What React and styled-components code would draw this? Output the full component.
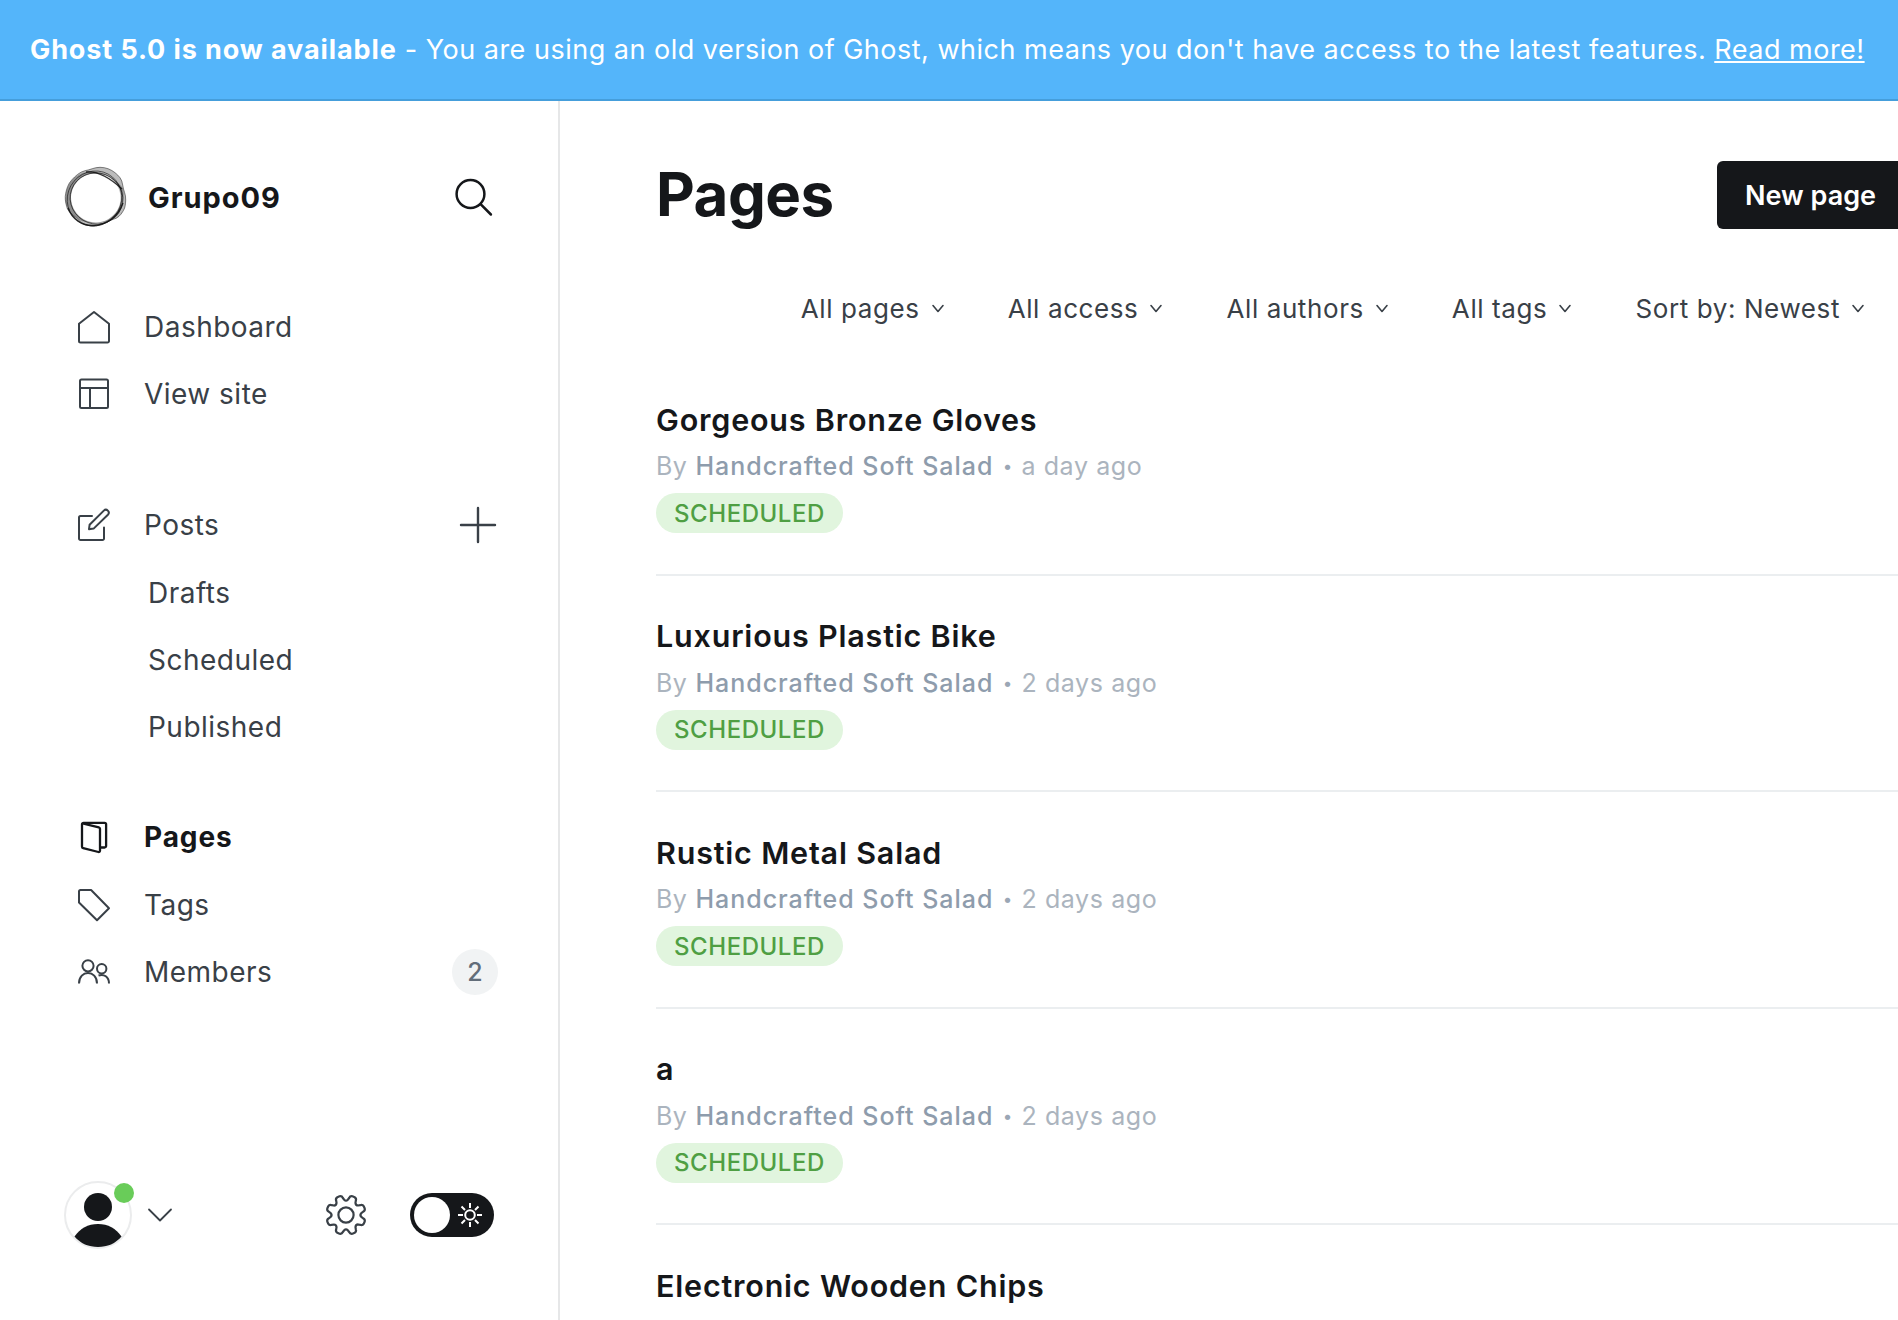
import React from "react";
import styled, { createGlobalStyle } from "styled-components";

const Global = createGlobalStyle`
  *, *::before, *::after { box-sizing: border-box; }
  html, body { margin: 0; overflow: hidden; background: #fff; }
  body {
    font-family: Inter, "Liberation Sans", sans-serif;
    font-size: 28px;
    color: #15171a;
    -webkit-font-smoothing: antialiased;
  }
  a { color: inherit; text-decoration: none; }
`;

const Shell = styled.div`
  height: 1320px;
  display: flex;
  flex-direction: column;
  overflow: hidden;
`;

const Banner = styled.div`
  flex: none;
  height: 101px;
  padding: 0 30px;
  border-bottom: 2px solid #459edb;
  background: #54b5fa;
  color: #fff;
  display: flex;
  align-items: center;
  white-space: nowrap;
  font-size: 27px;
  letter-spacing: 0.5px;
  b { font-weight: 700; letter-spacing: 0.9px; }
  a { text-decoration: underline; text-decoration-thickness: 2px; text-underline-offset: 2px; }
`;

const Columns = styled.div`
  flex: 1;
  min-height: 0;
  display: flex;
`;

const Sidebar = styled.nav`
  flex: none;
  width: 560px;
  border-right: 2px solid #e6e7e8;
  padding: 64px 60px 71px 64px;
  display: flex;
  flex-direction: column;
`;

const Brand = styled.div`
  height: 64px;
  padding-right: 6px;
  display: flex;
  align-items: center;
  margin-bottom: 64px;
`;

const SiteName = styled.div`
  flex: 1;
  margin-left: 20px;
  padding-top: 2px;
  font-weight: 700;
  font-size: 29px;
  letter-spacing: 0.95px;
  line-height: 40px;
`;

const NavGroup = styled.div`
  display: flex;
  flex-direction: column;
  margin-bottom: ${(p) => p.$gap}px;
`;

const NavItem = styled.a`
  height: 67.3px;
  display: flex;
  align-items: center;
  padding-left: ${(p) => (p.$sub ? 84 : 14)}px;
  gap: 34px;
  font-size: 28px;
  letter-spacing: ${(p) => (p.$active ? 0.9 : 0.48)}px;
  font-weight: ${(p) => (p.$active ? 700 : 400)};
  color: ${(p) => (p.$active ? "#15171a" : "#394047")};
  svg { flex: none; }
`;

const NavLabel = styled.span`
  flex: 1;
`;

const PlusSlot = styled.span`
  display: flex;
  margin-right: 2px;
`;

const Count = styled.span`
  flex: none;
  width: 46px;
  height: 46px;
  border-radius: 50%;
  background: #f1f3f4;
  color: #626d79;
  font-size: 25px;
  letter-spacing: 0;
  font-weight: 500;
  display: flex;
  align-items: center;
  justify-content: center;
`;

const UserBar = styled.div`
  margin-top: auto;
  height: 68px;
  display: flex;
  align-items: center;
`;

const AvatarWrap = styled.div`
  position: relative;
  width: 68px;
  height: 68px;
`;

const Dot = styled.span`
  position: absolute;
  top: 2px;
  right: -2px;
  width: 20px;
  height: 20px;
  border-radius: 50%;
  background: #69cc59;
`;

const CaretSlot = styled.span`
  display: flex;
  margin-left: 16px;
  flex: 1;
  color: #394047;
`;

const Toggle = styled.div`
  width: 84px;
  height: 44px;
  margin: 0 4px 0 44px;
  padding: 4px 12px 4px 4px;
  border-radius: 22px;
  background: #15171a;
  display: flex;
  align-items: center;
  justify-content: space-between;
`;

const Knob = styled.span`
  width: 36px;
  height: 36px;
  border-radius: 50%;
  background: #fff;
`;

const Main = styled.main`
  flex: 1;
  min-width: 0;
  padding: 60px 0 0 96px;
`;

const Header = styled.header`
  height: 68px;
  display: flex;
  align-items: center;
  justify-content: space-between;
`;

const Title = styled.h1`
  margin: 0;
  padding-bottom: 2px;
  font-size: 60px;
  line-height: 66px;
  letter-spacing: -0.5px;
  font-weight: 700;
`;

const NewButton = styled.a`
  flex: none;
  width: 190px;
  margin-right: -9px;
  height: 68px;
  border-radius: 6px;
  background: #15171a;
  color: #fff;
  font-size: 27px;
  font-weight: 600;
  padding-left: 28px;
  display: flex;
  align-items: center;
  white-space: nowrap;
`;

const Filters = styled.div`
  margin-top: 59px;
  height: 40px;
  padding-right: 34px;
  display: flex;
  align-items: center;
  justify-content: flex-end;
  gap: 64px;
`;

const Filter = styled.div`
  display: flex;
  align-items: center;
  gap: 12px;
  color: #394047;
  font-size: 26px;
  letter-spacing: 0.6px;
  white-space: nowrap;
`;

const List = styled.ol`
  list-style: none;
  margin: 31px 0 0;
  padding: 0;
`;

const Row = styled.li`
  height: 216.5px;
  border-bottom: 2px solid #ebeef0;
  padding-top: 39.5px;
`;

const RowTitle = styled.h3`
  margin: 0;
  font-size: 30.5px;
  line-height: 42px;
  letter-spacing: 0.8px;
  font-weight: 600;
`;

const Meta = styled.p`
  margin: 4.7px 0 0;
  font-size: 25px;
  line-height: 42px;
  letter-spacing: 0.5px;
  color: #abb4be;
  display: flex;
  align-items: center;
`;

const Author = styled.span`
  margin-left: 8px;
  font-weight: 500;
  letter-spacing: 0.98px;
  color: #8e9cac;
`;

const Bullet = styled.span`
  width: 28px;
  text-align: center;
  font-size: 17px;
  letter-spacing: 0;
  color: #9ba7b5;
`;

const When = styled.span`
  letter-spacing: 0.6px;
`;

const Status = styled.span`
  display: flex;
  align-items: center;
  width: 187px;
  height: 40px;
  margin-top: 6.3px;
  padding-left: 18px;
  border-radius: 20px;
  background: #e1f5de;
  color: #4f9f43;
  font-size: 24px;
  font-weight: 500;
  letter-spacing: 0.55px;
`;

const Line = ({ w, h = w, sw = 2, children, color = "currentColor" }) => (
  <svg width={w} height={h} viewBox={`0 0 ${w} ${h}`} fill="none" stroke={color} overflow="visible"
    strokeWidth={sw} strokeLinecap="round" strokeLinejoin="round">{children}</svg>
);

const Logo = () => (
  <svg width="64" height="64" viewBox="0 0 64 64" fill="none">
    <path fillRule="evenodd" fill="#222" fillOpacity=".3"
      d="M21 5.700C26 5 30 2.300 36 2.300S47 4.500 51 7.700 58 14 58.700 20 62 29 61.700 35 61 43 58.700 46.700 54 53 49.300 54.300 38 61 29.300 61 16.500 57 12.700 53.300 4 47 2.700 41.700 .700 33 1.700 28.300 4 19 7.700 15 15.500 7 21 5.700ZM31.700 8.500a24.800 24.600 0 1 0 .1 0Z" />
    <path stroke="#222" strokeOpacity=".6" strokeWidth=".9"
      d="M21 5.700C26 5 30 2.300 36 2.300S47 4.500 51 7.700 58 14 58.700 20 62 29 61.700 35 61 43 58.700 46.700 54 53 49.300 54.300 38 61 29.300 61 16.500 57 12.700 53.300 4 47 2.700 41.700 .700 33 1.700 28.300 4 19 7.700 15 15.500 7 21 5.700Z" />
    <path fillRule="evenodd" fill="#222" fillOpacity=".3"
      d="M2 30C3 15 16 6 29 6.500S57 18 59 24 59 48 49 54 16 60 8 49 1.500 36 2 30ZM31.500 8.500C18 8 7.500 19 7 32c0 14 11 25 24.500 25.500C45 57.500 56 47 57.500 33 58 19 45 8.500 31.500 8.500Z" />
    <g stroke="#111" strokeOpacity=".65" strokeWidth=".9">
      <ellipse cx="30.500" cy="33.500" rx="28" ry="26.800" transform="rotate(-50 30.500 33.500)" />
      <ellipse cx="32.500" cy="33.500" rx="26.500" ry="25.500" transform="rotate(20 32.500 33.500)" />
      <path d="M4 43C8 54 18 61 30 60.500S54 52 59 38M22 7c10-1 22 4 36 17" strokeWidth="1.400" strokeOpacity=".85" />
    </g>
  </svg>
);

const Search = () => (
  <Line w={37} sw={2.5}><circle cx="15.500" cy="15" r="13.900" /><path d="M25.600 25.100l10.300 10.400" /></Line>
);
const Home = () => (
  <Line w={32}><path d="M1 12.700 16 1l15 11.700V30a1.500 1.500 0 0 1-1.500 1.500h-27A1.500 1.500 0 0 1 1 30Z" /></Line>
);
const Site = () => (
  <Line w={32}><rect x="2" y="1.500" width="28" height="28.500" rx="1.500" /><path d="M2 10h28M12 10v20" /></Line>
);
const Pencil = () => (
  <Line w={32}>
    <path d="M14 7H2.500A1.500 1.500 0 0 0 1 8.500v21A1.500 1.500 0 0 0 2.500 31h22a1.500 1.500 0 0 0 1.500-1.500V18.500" />
    <path d="M11 20.200 11.600 15.800 25.800 1.600a2.900 2.900 0 0 1 4.100 4.100L15.600 19.600Z" />
  </Line>
);
const PagesIcon = () => (
  <Line w={32} sw={2.3}>
    <path d="M5.500 2.600 20.800 6.400a1.600 1.600 0 0 1 1.200 1.500v21.900a1.300 1.300 0 0 1-1.600 1.200L5.200 27.200A1.600 1.600 0 0 1 4 25.700V3.300A1.500 1.500 0 0 1 5.500 1.800H26.600A1.500 1.500 0 0 1 28.100 3.300V25A1.500 1.500 0 0 1 26.600 26.500H22.500" />
  </Line>
);
const Tag = () => (
  <Line w={32}><path d="M2.500 1h10.600L31 19.200 19 31.200 1 13.500V2.500A1.500 1.500 0 0 1 2.500 1Z" /></Line>
);
const Members = () => (
  <Line w={32}>
    <circle cx="10" cy="9.800" r="5.600" /><path strokeLinecap="butt" d="M1 27.500C1 13.500 19 13.500 19 27.500" />
    <circle cx="23.700" cy="12.800" r="4.700" /><path strokeLinecap="butt" d="M20.500 19.500C26 17.500 31 21 31 27.500" />
  </Line>
);
const Plus = () => <Line w={36} sw={2.4}><path d="M18 1v34M1 18h34" /></Line>;
const Caret = () => <Line w={24} h={14} sw={1.8}><path d="m1 1.500 11 11 11-11" /></Line>;
const SmallCaret = () => <Line w={12} h={8} sw={1.6}><path d="m1 1.500 5 6L11 1.500" /></Line>;

const Gear = () => {
  const pts = [];
  for (let i = 0; i < 8; i++) {
    const a = (i * Math.PI) / 4 - Math.PI / 8;
    const at = (r, d) => `${(20 + r * Math.cos(a + d)).toFixed(2)} ${(20 + r * Math.sin(a + d)).toFixed(2)}`;
    pts.push(`${i ? "L" : "M"}${at(17.3, -0.21)} Q${at(19.7, -0.18)} ${at(19.8, -0.06)} L${at(19.8, 0.06)} Q${at(19.7, 0.18)} ${at(17.3, 0.21)} L${at(15.4, 0.27)} Q${at(13.6, 0.3927)} ${at(15.4, 0.515)}`);
  }
  return (
    <Line w={40} color="#394047" sw={2.2}>
      <path d={pts.join(" ") + "Z"} /><circle cx="20" cy="20" r="7.600" />
    </Line>
  );
};

const Sun = () => (
  <Line w={24} color="#fff">
    <circle cx="12" cy="12" r="4.800" />
    <path strokeLinecap="butt" d="M12 0v5M12 19v5M0 12h5M19 12h5M3.500 3.500l3.500 3.500M17 17l3.500 3.500M3.500 20.500 7 17M17 7l3.500-3.500" />
  </Line>
);

const Avatar = () => (
  <svg width="68" height="68" viewBox="0 0 68 68">
    <circle cx="34" cy="34" r="33" fill="#fff" stroke="#ebeced" strokeWidth="2" />
    <circle cx="34" cy="26" r="14" fill="#15171a" />
    <path d="M10.500 55.500C16 47.500 24 43 34 43s18 4.500 23.500 12.500C51.500 62.500 43.500 66 34 66s-17.500-3.500-23.500-10.500Z" fill="#15171a" />
  </svg>
);

const pages = [
  { title: "Gorgeous Bronze Gloves", when: "a day ago" },
  { title: "Luxurious Plastic Bike", when: "2 days ago" },
  { title: "Rustic Metal Salad", when: "2 days ago" },
  { title: "a", when: "2 days ago" },
  { title: "Electronic Wooden Chips" },
];

const Nav = ({ icon, label, end, ...rest }) => (
  <NavItem {...rest}>{icon}<NavLabel>{label}</NavLabel>{end}</NavItem>
);

export default function App() {
  return (
    <>
      <Global />
      <Shell>
        <Banner>
          <span>
            <b>Ghost 5.0 is now available</b> - You are using an old version of Ghost, which means you don't have access to the latest features. <a href="#more">Read more!</a>
          </span>
        </Banner>
        <Columns>
          <Sidebar>
            <Brand><Logo /><SiteName>Grupo09</SiteName><Search /></Brand>
            <NavGroup $gap={64}>
              <Nav icon={<Home />} label="Dashboard" />
              <Nav icon={<Site />} label="View site" />
            </NavGroup>
            <NavGroup $gap={43}>
              <Nav icon={<Pencil />} label="Posts" end={<PlusSlot><Plus /></PlusSlot>} />
              <Nav $sub label="Drafts" />
              <Nav $sub label="Scheduled" />
              <Nav $sub label="Published" />
            </NavGroup>
            <NavGroup $gap={0}>
              <Nav $active icon={<PagesIcon />} label="Pages" />
              <Nav icon={<Tag />} label="Tags" />
              <Nav icon={<Members />} label="Members" end={<Count>2</Count>} />
            </NavGroup>
            <UserBar>
              <AvatarWrap><Avatar /><Dot /></AvatarWrap>
              <CaretSlot><Caret /></CaretSlot>
              <Gear />
              <Toggle><Knob /><Sun /></Toggle>
            </UserBar>
          </Sidebar>
          <Main>
            <Header><Title>Pages</Title><NewButton>New page</NewButton></Header>
            <Filters>
              {["All pages", "All access", "All authors", "All tags", "Sort by: Newest"].map((f) => (
                <Filter key={f}>{f}<SmallCaret /></Filter>
              ))}
            </Filters>
            <List>
              {pages.map(({ title, when }) => (
                <Row key={title}>
                  <RowTitle>{title}</RowTitle>
                  {when && (
                    <>
                      <Meta>By <Author>Handcrafted Soft Salad</Author><Bullet>•</Bullet><When>{when}</When></Meta>
                      <Status>SCHEDULED</Status>
                    </>
                  )}
                </Row>
              ))}
            </List>
          </Main>
        </Columns>
      </Shell>
    </>
  );
}
